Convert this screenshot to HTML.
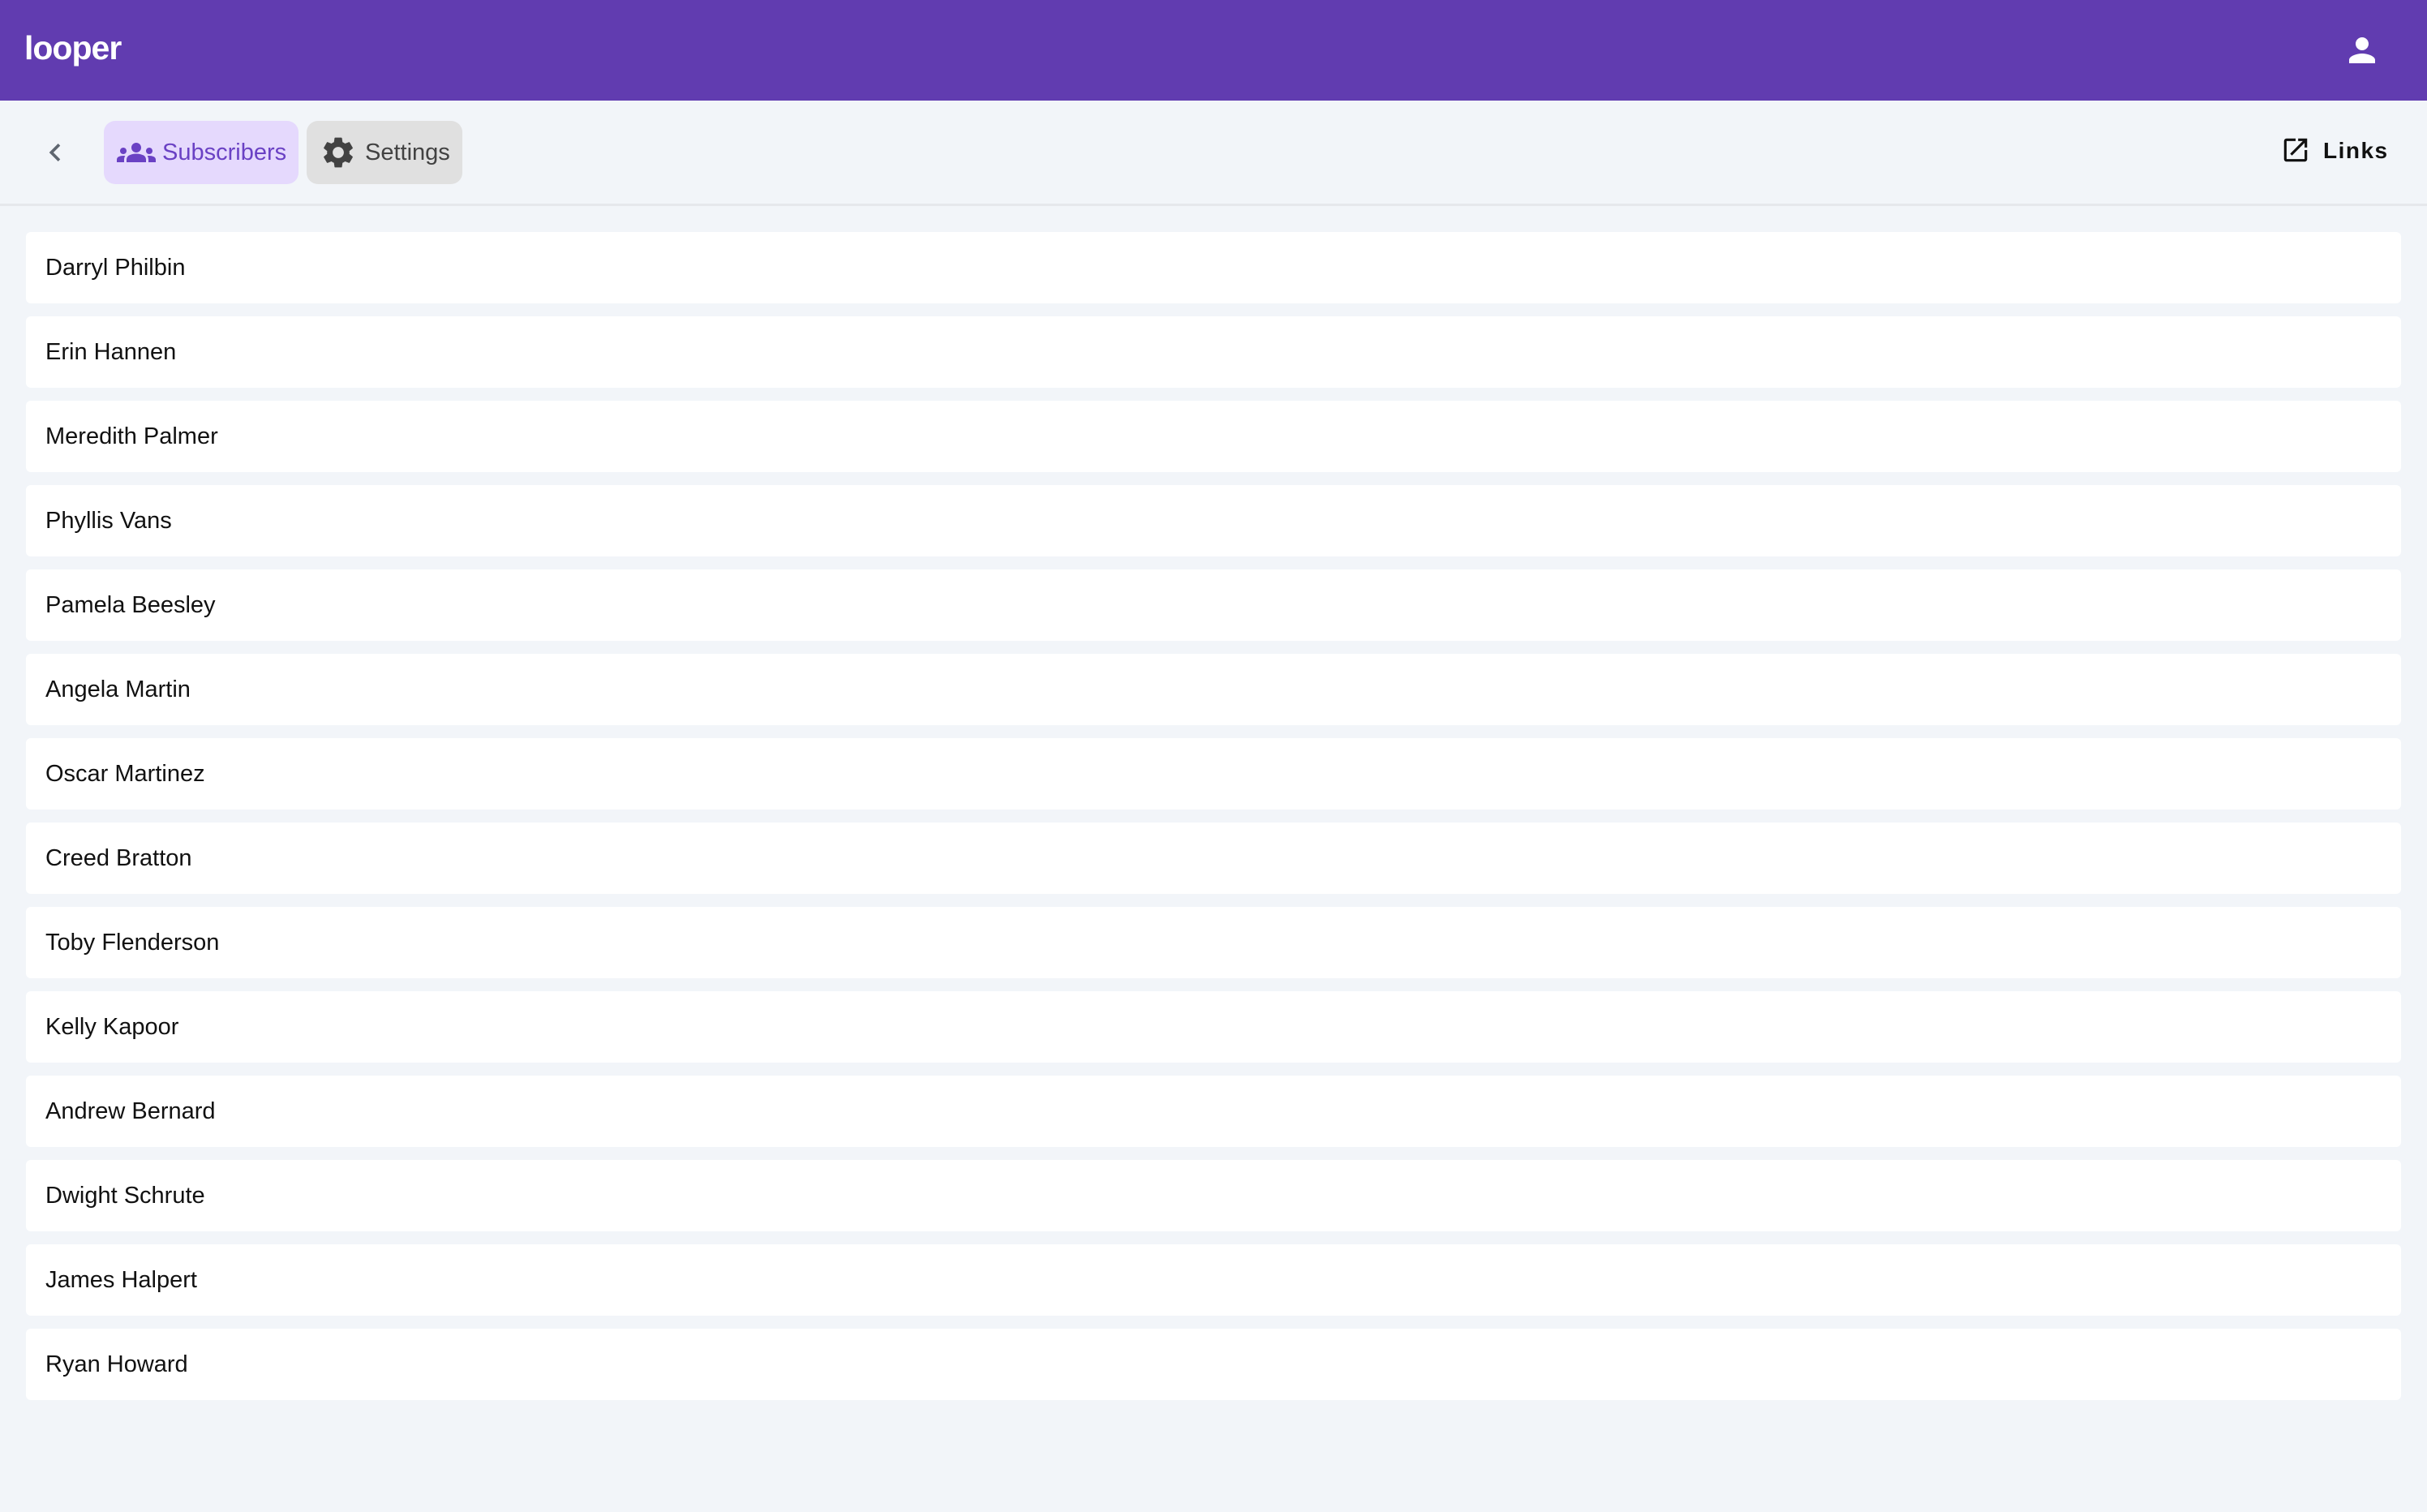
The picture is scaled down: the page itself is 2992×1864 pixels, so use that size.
<!DOCTYPE html>
<html><head><meta charset="utf-8"><style>
*{box-sizing:border-box;margin:0;padding:0}
body{width:2992px;height:1864px;background:#f2f5f9;font-family:"Liberation Sans",sans-serif;overflow:hidden;position:relative}
.hdr{position:absolute;left:0;top:0;width:2992px;height:124px;background:#613cb0}
.logo{position:absolute;left:30px;top:36px;color:#fff;font-size:41px;font-weight:bold;letter-spacing:-1px}
.tb{position:absolute;left:0;top:124px;width:2992px;height:130px;border-bottom:3px solid #e6e8ec}
.btn{position:absolute;top:25px;height:78px;border-radius:14px;font-size:29px;display:flex;align-items:center}
.sub{left:128px;width:240px;background:#e5d9fd;color:#6a41c4}
.set{left:378px;width:192px;background:#e0e0e0;color:#424242}
.links{position:absolute;left:2864px;top:46px;font-size:28px;letter-spacing:1.5px;color:#111;font-weight:bold}
.row{position:absolute;left:32px;width:2928px;height:88px;background:#fff;border-radius:6px;font-size:29px;color:#111;padding-left:24px;line-height:88px}
</style></head><body>
<div class="hdr"><div class="logo">looper</div>
<svg style="position:absolute;left:2888px;top:38px" width="48" height="48" viewBox="0 0 24 24"><path fill="#fff" d="M12 12c2.210 0 4-1.790 4-4s-1.790-4-4-4-4 1.790-4 4 1.790 4 4 4zm0 2c-2.670 0-8 1.340-8 4v2h16v-2c0-2.660-5.330-4-8-4z"/></svg>
</div>
<div class="tb">
<svg style="position:absolute;left:46px;top:42px" width="44" height="44" viewBox="0 0 24 24"><path fill="#5f6670" d="M15.41 7.41 14 6l-6 6 6 6 1.41-1.41L10.83 12z"/></svg>
<div class="btn sub"><svg style="margin:0 8px 0 16px" width="48" height="48" viewBox="0 0 24 24"><path fill="#6a41c4" d="M12 12.75c1.63 0 3.07.39 4.24.9 1.08.48 1.76 1.56 1.76 2.73V18H6v-1.61c0-1.18.68-2.26 1.76-2.730 1.17-.52 2.61-.91 4.24-.91zM4 13c1.1 0 2-.9 2-2s-.9-2-2-2-2 .9-2 2 .9 2 2 2zm1.13 1.1c-.37-.06-.74-.1-1.13-.1-.99 0-1.930.21-2.780.58A2.01 2.01 0 0 0 0 16.43V18h4.5v-1.61c0-.83.23-1.61.63-2.29zM20 13c1.1 0 2-.9 2-2s-.9-2-2-2-2 .9-2 2 .9 2 2 2zm4 3.43c0-.81-.48-1.53-1.22-1.85A6.95 6.95 0 0 0 20 14c-.39 0-.76.04-1.130.1.4.68.63 1.46.63 2.29V18H24v-1.57zM12 6c1.66 0 3 1.34 3 3s-1.34 3-3 3-3-1.34-3-3 1.34-3 3-3z"/></svg>Subscribers</div>
<div class="btn set"><svg style="margin:0 10px 0 16px" width="46" height="46" viewBox="0 0 24 24"><path fill="#424242" d="M19.14 12.94c.04-.3.06-.61.06-.94 0-.32-.02-.64-.07-.94l2.03-1.58a.49.49 0 0 0 .12-.61l-1.92-3.32a.488.488 0 0 0-.59-.22l-2.39.96c-.5-.38-1.03-.7-1.62-.94l-.36-2.54a.484.484 0 0 0-.48-.41h-3.84c-.24 0-.43.17-.47.41l-.36 2.54c-.59.24-1.13.57-1.62.94l-2.39-.96c-.22-.08-.47 0-.59.22L2.74 8.87c-.12.21-.08.47.12.61l2.03 1.58c-.05.3-.09.63-.09.94s.02.64.07.94l-2.03 1.58a.49.49 0 0 0-.12.61l1.92 3.32c.12.22.37.29.59.22l2.39-.96c.5.38 1.030.7 1.62.94l.36 2.54c.05.24.24.41.48.41h3.84c.24 0 .44-.17.47-.41l.36-2.54c.59-.24 1.13-.56 1.62-.94l2.39.96c.22.08.47 0 .59-.22l1.92-3.32c.12-.22.07-.47-.12-.61l-2.01-1.58zM12 15.6c-1.98 0-3.6-1.62-3.6-3.6s1.62-3.6 3.6-3.6 3.6 1.62 3.6 3.6-1.62 3.6-3.6 3.6z"/></svg>Settings</div>
<svg style="position:absolute;left:2811px;top:42px" width="38" height="38" viewBox="0 0 24 24"><path fill="#111" d="M19 19H5V5h7V3H5a2 2 0 0 0-2 2v14a2 2 0 0 0 2 2h14c1.1 0 2-.9 2-2v-7h-2v7zM14 3v2h3.59l-9.83 9.83 1.41 1.41L19 6.41V10h2V3h-7z"/></svg>
<div class="links">Links</div>
</div>
<div class="row" style="top:286px">Darryl Philbin</div>
<div class="row" style="top:390px">Erin Hannen</div>
<div class="row" style="top:494px">Meredith Palmer</div>
<div class="row" style="top:598px">Phyllis Vans</div>
<div class="row" style="top:702px">Pamela Beesley</div>
<div class="row" style="top:806px">Angela Martin</div>
<div class="row" style="top:910px">Oscar Martinez</div>
<div class="row" style="top:1014px">Creed Bratton</div>
<div class="row" style="top:1118px">Toby Flenderson</div>
<div class="row" style="top:1222px">Kelly Kapoor</div>
<div class="row" style="top:1326px">Andrew Bernard</div>
<div class="row" style="top:1430px">Dwight Schrute</div>
<div class="row" style="top:1534px">James Halpert</div>
<div class="row" style="top:1638px">Ryan Howard</div>
</body></html>
